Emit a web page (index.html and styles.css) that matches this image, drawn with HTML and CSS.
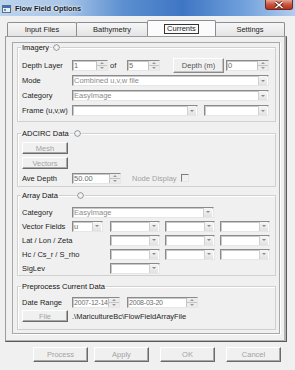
FILE: index.html
```html
<!DOCTYPE html>
<html lang="en">
<head>
    <meta charset="UTF-8">
    <meta name="viewport" content="width=device-width, initial-scale=1.0">
    <title>Flow Field Options</title>
    <link rel="stylesheet" href="styles.css">
</head>
<body>

<div class="window">

    <!-- Title bar -->
    <div class="titlebar">
        <svg class="app-icon" width="9" height="8" viewBox="0 0 9 8">
            <rect x="0.5" y="0.5" width="8" height="7" fill="#e8eef6" stroke="#5a6e8a"/>
            <rect x="1" y="1" width="7" height="2" fill="#3d6fb8"/>
            <rect x="2" y="4" width="2" height="2" fill="#7a8aa0"/>
        </svg>
        <span class="title">Flow Field Options</span>
        <div class="close-btn">
            <svg width="10" height="8" viewBox="0 0 10 8">
                <path d="M1.5 1 L8.5 7 M8.5 1 L1.5 7" stroke="#5a1a10" stroke-width="3"/>
                <path d="M1.5 1 L8.5 7 M8.5 1 L1.5 7" stroke="#fff" stroke-width="1.6"/>
            </svg>
        </div>
    </div>

    <!-- Tabs -->
    <div class="tabs">
        <div class="tab w70">Input Files</div>
        <div class="tab w71">Bathymetry</div>
        <div class="tab tab-active"><span class="focus">Currents</span></div>
        <div class="tab w70">Settings</div>
    </div>

    <div class="tab-panel">
        <div class="inner-panel">

            <!-- Imagery -->
            <div class="group imagery">
                <div class="legend"><span class="legend-text">Imagery</span><span class="radio r-imagery"></span></div>
                <div class="rows rows-imagery">
                    <div class="row">
                        <span class="lbl">Depth Layer</span>
                        <div class="spin sp-layer"><span class="val">1</span><span class="spin-btn"><i class="up"></i><i class="down"></i></span></div>
                        <span class="of">of</span>
                        <div class="spin sp-count"><span class="val">5</span><span class="spin-btn"><i class="up"></i><i class="down"></i></span></div>
                        <div class="btn btn-depth">Depth (m)</div>
                        <div class="spin sp-depth"><span class="val">0</span><span class="spin-btn"><i class="up"></i><i class="down"></i></span></div>
                    </div>
                    <div class="row">
                        <span class="lbl">Mode</span>
                        <div class="select sel-wide"><span class="val faint">Combined u,v,w file</span><span class="arrow"></span></div>
                    </div>
                    <div class="row">
                        <span class="lbl">Category</span>
                        <div class="select sel-wide"><span class="val faint">EasyImage</span><span class="arrow"></span></div>
                    </div>
                    <div class="row">
                        <span class="lbl">Frame (u,v,w)</span>
                        <div class="select sel-frame"><span class="val"></span><span class="arrow"></span></div>
                        <div class="select sel-frame2"><span class="val"></span><span class="arrow"></span></div>
                    </div>
                </div>
            </div>

            <!-- ADCIRC Data -->
            <div class="group adcirc">
                <div class="legend"><span class="legend-text">ADCIRC Data</span><span class="radio r-adcirc"></span></div>
                <div class="btn btn-small btn-mesh">Mesh</div>
                <div class="btn btn-small btn-vectors">Vectors</div>
                <div class="row row-ave">
                    <span class="lbl">Ave Depth</span>
                    <div class="spin sp-ave"><span class="val">50.00</span><span class="spin-btn"><i class="up"></i><i class="down"></i></span></div>
                    <span class="node-lbl">Node Display</span>
                    <span class="checkbox"></span>
                </div>
            </div>

            <!-- Array Data -->
            <div class="group array">
                <div class="legend"><span class="legend-text">Array Data</span><span class="radio r-array"></span></div>
                <div class="rows rows-array">
                    <div class="arow">
                        <span class="lbl">Category</span>
                        <div class="select sel-cat"><span class="val faint">EasyImage</span><span class="arrow"></span></div>
                    </div>
                    <div class="arow">
                        <span class="lbl">Vector Fields</span>
                        <div class="select sel-u"><span class="val">u</span><span class="arrow"></span></div>
                        <div class="select sel-field"><span class="val"></span><span class="arrow"></span></div>
                        <div class="select sel-field"><span class="val"></span><span class="arrow"></span></div>
                        <div class="select sel-field"><span class="val"></span><span class="arrow"></span></div>
                    </div>
                    <div class="arow">
                        <span class="lbl lbl-long">Lat / Lon / Zeta</span>
                        <div class="select sel-field"><span class="val"></span><span class="arrow"></span></div>
                        <div class="select sel-field"><span class="val"></span><span class="arrow"></span></div>
                        <div class="select sel-field"><span class="val"></span><span class="arrow"></span></div>
                    </div>
                    <div class="arow">
                        <span class="lbl lbl-long">Hc / Cs_r / S_rho</span>
                        <div class="select sel-field"><span class="val"></span><span class="arrow"></span></div>
                        <div class="select sel-field"><span class="val"></span><span class="arrow"></span></div>
                        <div class="select sel-field"><span class="val"></span><span class="arrow"></span></div>
                    </div>
                    <div class="arow">
                        <span class="lbl lbl-long">SigLev</span>
                        <div class="select sel-field"><span class="val"></span><span class="arrow"></span></div>
                    </div>
                </div>
            </div>

            <!-- Preprocess Current Data -->
            <div class="group preprocess">
                <div class="legend"><span class="legend-text">Preprocess Current Data</span></div>
                <div class="row row-date">
                    <span class="lbl">Date Range</span>
                    <div class="spin sp-date1"><span class="val date">2007-12-14</span><span class="spin-btn"><i class="up"></i><i class="down"></i></span></div>
                    <div class="spin sp-date2"><span class="val date">2008-03-20</span><span class="spin-btn"><i class="up"></i><i class="down"></i></span></div>
                </div>
                <div class="row row-file">
                    <div class="btn btn-small">File</div>
                    <span class="path">.\MaricultureBc\FlowFieldArrayFile</span>
                </div>
            </div>

        </div>
    </div>

    <!-- Dialog buttons -->
    <div class="dialog-buttons">
        <div class="btn btn-dlg">Process</div>
        <div class="btn btn-dlg btn-apply">Apply</div>
        <div class="btn btn-dlg btn-gap">OK</div>
        <div class="btn btn-dlg btn-gap">Cancel</div>
    </div>

</div>

</body>
</html>
```

FILE: styles.css
```css
/* Base */
body {
    margin: 0;
    background-color: #f0f0f0;
    font-family: "Liberation Sans", Arial, sans-serif;
    font-size: 7.5px;
    color: #1e1e1e;
}

.window {
    width: 295px;
    height: 370px;
    overflow: hidden;
    background-color: #f0f0f0;
}

/* Title bar */
.titlebar {
    height: 16px;
    display: flex;
    align-items: center;
    background: linear-gradient(to right, #bcd3ec 0%, #a9c6e8 22%, #5b8fd0 42%, #3f76c4 62%, #6f9fdb 82%, #b3cdee 100%);
}

.app-icon {
    margin-left: 2px;
    margin-top: 1px;
}

.title {
    margin-left: 4px;
    font-size: 7.4px;
    font-weight: bold;
    color: #1a1a1a;
    text-shadow: 0 0 3px #e8f2ff, 0 0 2px #e8f2ff;
}

.close-btn {
    margin-left: auto;
    margin-right: 2px;
    align-self: flex-start;
    width: 28px;
    height: 10px;
    display: flex;
    align-items: center;
    justify-content: center;
    background: linear-gradient(#e8a393, #c8553f 50%, #b5321c);
    border: 1px solid #6b2b22;
    border-top: none;
    border-radius: 0 0 3px 3px;
    box-sizing: border-box;
}

/* Tabs */
.tabs {
    display: flex;
    margin: 6px 0 0 7px;
    height: 14px;
}

.tab {
    box-sizing: border-box;
    height: 14px;
    border: 1px solid #8c8e94;
    border-bottom: none;
    border-radius: 2px 2px 0 0;
    background: linear-gradient(#f6f6f6, #e4e4e4);
    display: flex;
    align-items: center;
    justify-content: center;
    margin-right: -1px;
}

.w70 { width: 70px; }
.w71 { width: 72px; }

.tab-active {
    width: 69px;
    height: 16px;
    margin-top: -2px;
    margin-bottom: -1px;
    background: #fbfbfb;
    position: relative;
    z-index: 1;
}

.focus {
    border: 1px solid #333;
    padding: 0 2px;
    line-height: 8px;
}

/* Tab page */
.tab-panel {
    box-sizing: border-box;
    margin-left: 5px;
    width: 282px;
    height: 306px;
    border: 1px solid;
    border-color: #9a9ca2 #5a5a5a #5a5a5a #9a9ca2;
    box-shadow: inset -2px -1px 0 #b4b4b4;
    padding: 5px 0 0 6px;
}

.inner-panel {
    box-sizing: border-box;
    width: 268px;
    height: 292px;
    border: 1px solid #a8a8a8;
    box-shadow: 1px 1px 0 #fff;
    padding: 4px 0 0 4px;
}

/* Group boxes */
.group {
    box-sizing: border-box;
    width: 259px;
    border: 1px solid #d0d0d0;
    box-shadow: inset 1px 1px 0 #fff;
    padding-left: 4px;
}

.imagery { padding-bottom: 3px; }
.adcirc { margin-top: 11px; padding-bottom: 2px; }
.array { margin-top: 8px; }
.preprocess { margin-top: 10px; padding-bottom: 7px; }

.legend {
    display: flex;
    align-items: center;
    height: 9px;
    margin-top: -5px;
}

.legend-text {
    background-color: #f0f0f0;
    padding: 0 1px;
    margin-left: -1px;
    color: #111;
}

.radio {
    box-sizing: border-box;
    width: 7px;
    height: 7px;
    border: 1px solid #8e8f8f;
    border-radius: 50%;
    background: radial-gradient(#fafafa, #dcdcdc);
    outline: 1px solid #f0f0f0;
}

.r-imagery { margin-left: 3px; }
.r-adcirc { margin-left: 4px; }
.r-array { margin-left: 18px; }

/* Rows */
.rows-imagery { margin-top: 6px; }
.rows-array { margin-top: 5px; }

.row {
    display: flex;
    align-items: center;
    height: 15px;
}

.arow {
    display: flex;
    align-items: center;
    height: 14px;
}

.lbl {
    width: 50px;
    flex-shrink: 0;
    white-space: nowrap;
}

.lbl-long { width: 88px; }

/* Inputs */
.spin, .select {
    box-sizing: border-box;
    height: 11px;
    display: flex;
    align-items: stretch;
    background-color: #fff;
    border: 1px solid;
    border-color: #8a8a8a #e6e6e6 #e6e6e6 #8a8a8a;
    box-shadow: inset 1px 1px 0 #c8c8c8;
}

.val {
    flex: 1;
    padding-left: 1px;
    line-height: 9px;
    color: #6d6d6d;
    white-space: nowrap;
    overflow: hidden;
}

.date {
    font-size: 7px;
    letter-spacing: -0.2px;
}

.faint { color: #8c8c8c; }

.spin-btn {
    width: 10px;
    flex-shrink: 0;
    display: flex;
    flex-direction: column;
    background-color: #ececec;
    border-left: 1px solid #c4c4c4;
}

.spin-btn i {
    flex: 1;
    display: flex;
    align-items: center;
    justify-content: center;
}

.spin-btn .up { border-bottom: 1px solid #c4c4c4; }

.spin-btn .up::after {
    content: "";
    border-left: 2px solid transparent;
    border-right: 2px solid transparent;
    border-bottom: 2px solid #9a9a9a;
}

.spin-btn .down::after {
    content: "";
    border-left: 2px solid transparent;
    border-right: 2px solid transparent;
    border-top: 2px solid #9a9a9a;
}

.arrow {
    box-sizing: border-box;
    width: 9px;
    flex-shrink: 0;
    margin: 0 1px 0 0;
    background: linear-gradient(#f6f6f6, #e2e2e2);
    border-left: 1px solid #d0d0d0;
    display: flex;
    align-items: center;
    justify-content: center;
}

.arrow::after {
    content: "";
    border-left: 2px solid transparent;
    border-right: 2px solid transparent;
    border-top: 2px solid #8a8a8a;
}

.sp-layer { width: 36px; }
.sp-count { width: 33px; }
.sp-depth { width: 43px; margin-left: 2px; }
.sp-ave { width: 49px; }
.sp-date1 { width: 48px; }
.sp-date2 { width: 71px; margin-left: 7px; }

.of {
    width: 19px;
    padding-left: 2px;
    box-sizing: border-box;
}

.sel-wide { width: 197px; }
.sel-frame { width: 126px; }
.sel-frame2 { width: 65px; margin-left: 6px; }
.sel-cat { width: 142px; }
.sel-u { width: 31px; margin-right: 7px; }
.sel-field { width: 50px; margin-right: 5px; }

/* Buttons */
.btn {
    box-sizing: border-box;
    display: flex;
    align-items: center;
    justify-content: center;
    background-color: #f0f0f0;
    border: 1px solid;
    border-color: #fff #6a6a6a #6a6a6a #fff;
    box-shadow: inset -1px -1px 0 #a8a8a8;
    color: #a3a3a3;
    white-space: nowrap;
}

.btn-depth {
    width: 51px;
    height: 15px;
    margin-left: 13px;
    color: #555;
    border-color: #fff #8a8a8a #8a8a8a #fff;
    box-shadow: inset -1px -1px 0 #c4c4c4;
}

.btn-small {
    width: 46px;
    height: 12px;
}

.btn-mesh { margin-top: 4px; }
.btn-vectors { margin-top: 3px; }

.row-ave {
    height: 12px;
    margin-top: 3px;
}

.node-lbl {
    margin-left: 11px;
    color: #a3a3a3;
}

.checkbox {
    box-sizing: border-box;
    width: 8px;
    height: 8px;
    margin-left: 4px;
    border: 1px solid;
    border-color: #7a7a7a #e6e6e6 #e6e6e6 #7a7a7a;
    background-color: #f0f0f0;
}

.row-date {
    height: 12px;
    margin-top: 5px;
}

.row-file {
    height: 12px;
    margin-top: 2px;
}

.path { margin-left: 4px; }

/* Dialog buttons */
.dialog-buttons {
    display: flex;
    margin: 5px 0 0 33px;
}

.btn-dlg {
    width: 55px;
    height: 15px;
}

.btn-apply { margin-left: 6px; }
.btn-gap { margin-left: 11px; }
```
